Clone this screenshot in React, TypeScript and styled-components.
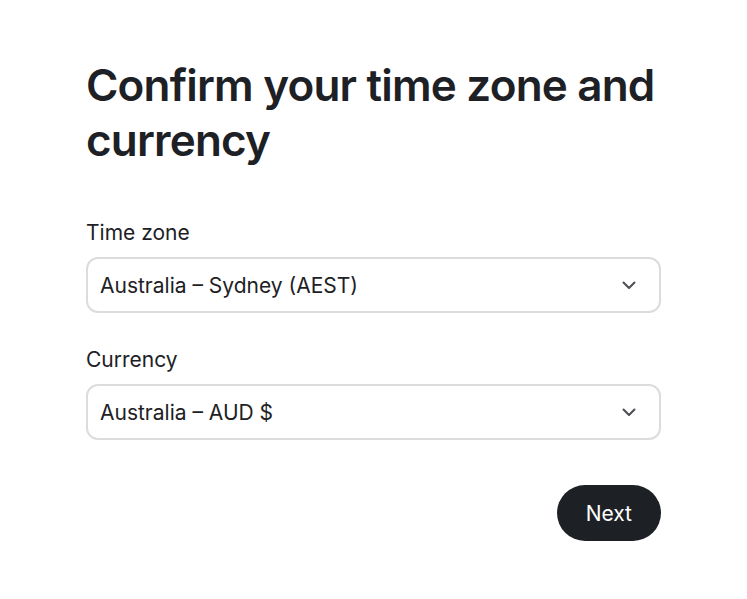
import React from 'react';
import styled, { createGlobalStyle } from 'styled-components';

const GlobalStyle = createGlobalStyle`
	html, body {
		margin: 0;
		background: #ffffff;
	}
	body {
		font-family: Inter, "Noto Sans", sans-serif;
		color: #1d2125;
	}
`;

const Page = styled.main`
	width: 575px;
	padding: 58px 0 0 86px;
`;

const Title = styled.h1`
	margin: 0 0 51px;
	font-size: 44px;
	line-height: 55px;
	font-weight: 600;
	letter-spacing: -0.8px;
`;

const Field = styled.div`
	display: flex;
	flex-direction: column;
	gap: 10px;
	margin-bottom: 33px;
`;

const Label = styled.label`
	font-size: 21px;
	line-height: 28px;
`;

const SelectBox = styled.div`
	display: flex;
	align-items: center;
	justify-content: space-between;
	height: 52px;
	padding: 0 22px 0 12px;
	border: 2px solid #dcdcdc;
	border-radius: 12px;
	font-size: 21px;
`;

const Actions = styled.div`
	display: flex;
	justify-content: flex-end;
	margin-top: 45px;
`;

const Button = styled.button`
	height: 56px;
	padding: 0 29px;
	border: none;
	border-radius: 28px;
	background: #1d2125;
	color: #ffffff;
	font-family: inherit;
	font-size: 21px;
`;

const Chevron = () => (
	<svg width="16" height="16" viewBox="0 0 16 16" fill="none">
		<path d="M2.5 5.5 8 11l5.5-5.5" stroke="#4a4d51" strokeWidth="2" strokeLinecap="round" strokeLinejoin="round" />
	</svg>
);

const Select: React.FC<{ label: string; value: string }> = ({ label, value }) => (
	<Field>
		<Label>{label}</Label>
		<SelectBox>
			<span>{value}</span>
			<Chevron />
		</SelectBox>
	</Field>
);

export default function App() {
	return (
		<>
			<GlobalStyle />
			<Page>
				<Title>Confirm your time zone and currency</Title>
				<Select label="Time zone" value="Australia – Sydney (AEST)" />
				<Select label="Currency" value="Australia – AUD $" />
				<Actions>
					<Button>Next</Button>
				</Actions>
			</Page>
		</>
	);
}
